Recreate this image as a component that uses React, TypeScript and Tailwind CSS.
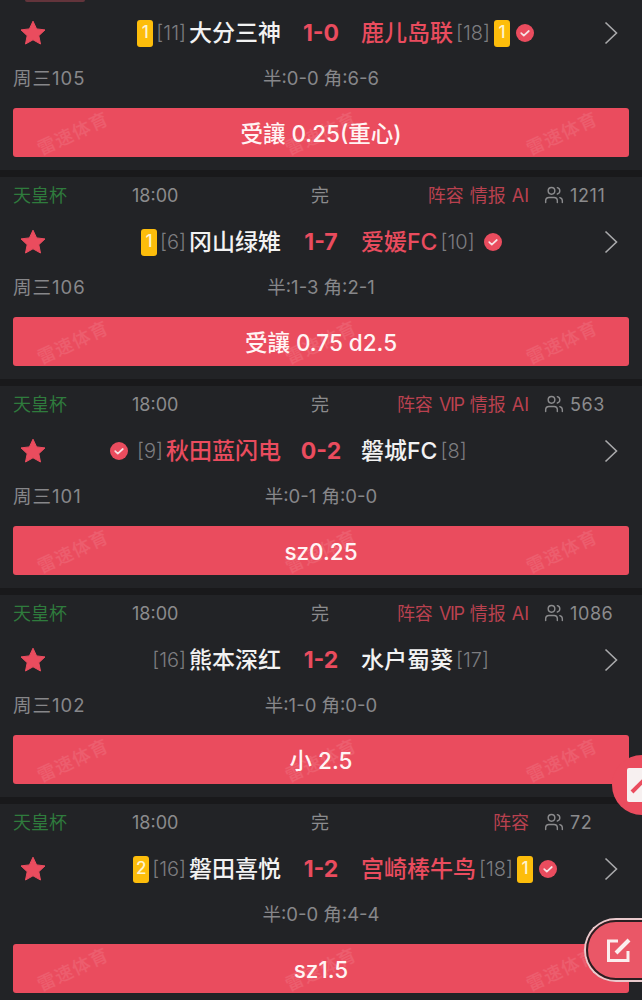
import { Users } from "lucide-react";

type Side = { name: string; rank?: string; badge?: string; won?: boolean; check?: boolean };

type Match = {
  links: string[];
  count: string;
  home: Side;
  away: Side;
  score: string;
  week?: string;
  half: string;
  tip: string;
};

const matches: Match[] = [
  {
    links: ["阵容", "情报", "AI"],
    count: "988",
    home: { name: "大分三神", rank: "[11]", badge: "1" },
    away: { name: "鹿儿岛联", rank: "[18]", badge: "1", won: true, check: true },
    score: "1-0",
    week: "周三105",
    half: "半:0-0 角:6-6",
    tip: "受讓 0.25(重心)",
  },
  {
    links: ["阵容", "情报", "AI"],
    count: "1211",
    home: { name: "冈山绿雉", rank: "[6]", badge: "1" },
    away: { name: "爱媛FC", rank: "[10]", won: true, check: true },
    score: "1-7",
    week: "周三106",
    half: "半:1-3 角:2-1",
    tip: "受讓 0.75 d2.5",
  },
  {
    links: ["阵容", "VIP", "情报", "AI"],
    count: "563",
    home: { name: "秋田蓝闪电", rank: "[9]", won: true, check: true },
    away: { name: "磐城FC", rank: "[8]" },
    score: "0-2",
    week: "周三101",
    half: "半:0-1 角:0-0",
    tip: "sz0.25",
  },
  {
    links: ["阵容", "VIP", "情报", "AI"],
    count: "1086",
    home: { name: "熊本深红", rank: "[16]" },
    away: { name: "水户蜀葵", rank: "[17]" },
    score: "1-2",
    week: "周三102",
    half: "半:1-0 角:0-0",
    tip: "小 2.5",
  },
  {
    links: ["阵容"],
    count: "72",
    home: { name: "磐田喜悦", rank: "[16]", badge: "2" },
    away: { name: "宫崎棒牛鸟", rank: "[18]", badge: "1", won: true, check: true },
    score: "1-2",
    half: "半:0-0 角:4-4",
    tip: "sz1.5",
  },
];

function Star() {
  return (
    <svg width="26" height="26" viewBox="0 0 26 26">
      <path
        d="M13 1.2l3.6 7.7 8.4 1-6.2 5.8 1.7 8.3-7.5-4.2-7.5 4.2 1.7-8.3L1 9.9l8.4-1z"
        fill="#ea4c5e"
        stroke="#ea4c5e"
        strokeLinejoin="round"
      />
    </svg>
  );
}

function Check() {
  return (
    <svg width="18" height="18" viewBox="0 0 18 18" className="shrink-0">
      <circle cx="9" cy="9" r="9" fill="#ea4c5e" />
      <path d="M5.2 9.2l2.6 2.4 5-4.6" fill="none" stroke="#f6e3e5" strokeWidth="1.7" strokeLinecap="round" strokeLinejoin="round" />
    </svg>
  );
}

function Chevron() {
  return (
    <svg width="14" height="24" viewBox="0 0 14 24">
      <path d="M1.5 1.5L12.5 12 1.5 22.5" fill="none" stroke="#a9a9ab" strokeWidth="1.6" />
    </svg>
  );
}

function Badge({ value }: { value: string }) {
  return (
    <span className="flex h-[27px] w-[16px] shrink-0 items-center justify-center rounded-[3px] bg-[#fdbd0b] text-[17px] font-medium text-[#fdf3d0]">
      {value}
    </span>
  );
}

function Mark({ className }: { className: string }) {
  return (
    <span className={`pointer-events-none absolute top-[12px] -rotate-[25deg] text-[18px] tracking-[1px] text-white/10 ${className}`}>
      雷速体育
    </span>
  );
}

function MatchCard({ match }: { match: Match }) {
  const { home, away } = match;
  return (
    <div className="bg-[#222326] px-[13px] pb-[13px]">
      <div className="flex h-[36px] items-center text-[18px] text-[#8b8b8d]">
        <span className="w-[119px] text-[#2f7b3d]">天皇杯</span>
        <span className="w-[178px]">18:00</span>
        <span className="w-[20px] text-center">完</span>
        <div className="ml-auto flex gap-[6px] text-[#b9414f]">
          {match.links.map((link) => (
            <span key={link} className={link === "VIP" ? "tracking-[-1.3px]" : ""}>
              {link}
            </span>
          ))}
        </div>
        <div className="flex w-[100px] items-center pl-[15px]">
          <Users size={20} strokeWidth={1.7} className="mr-[6px] shrink-0" />
          <span className="tracking-[0.6px]">{match.count}</span>
        </div>
      </div>

      <div className="relative flex h-[56px] items-center pt-[2px]">
        <div className="w-[40px] pl-[7px]">
          <Star />
        </div>
        <div className="flex w-[228px] items-center justify-end">
          {home.check && <Check />}
          {home.badge && <Badge value={home.badge} />}
          <span className={`${home.check ? "ml-[9px]" : "ml-[3px]"} text-[20px] font-light text-[#7d7d80]`}>{home.rank}</span>
          <span className={`ml-[3px] text-[23px] font-medium ${home.won ? "text-[#ea4c5e]" : "text-[#f2f2f2]"}`}>{home.name}</span>
        </div>
        <span className="w-[80px] text-center text-[23px] font-bold text-[#ea4c5e]">{match.score}</span>
        <div className="flex items-center">
          <span className={`text-[23px] font-medium ${away.won ? "text-[#ea4c5e]" : "text-[#f2f2f2]"}`}>{away.name}</span>
          <span className="ml-[3px] text-[20px] font-light text-[#7d7d80]">{away.rank}</span>
          {away.badge && <span className="ml-[4px]"><Badge value={away.badge} /></span>}
          {away.check && <span className={away.badge ? "ml-[6px]" : "ml-[9px]"}><Check /></span>}
        </div>
        <div className="ml-auto mr-[11px] flex">
          <Chevron />
        </div>
      </div>

      <div className="flex h-[36px] items-center pt-[2px] text-[18.5px] text-[#87878a]">
        <span className="w-[200px] tracking-[1px]">{match.week}</span>
        <span className="w-[216px] text-center">{match.half}</span>
      </div>

      <div className="relative mt-[12px] flex h-[49px] items-center justify-center overflow-hidden rounded-[3px] bg-[#ea4c5e] text-[22.5px] font-medium text-[#fff4f4]">
        <Mark className="left-[22px]" />
        <Mark className="left-[270px]" />
        <Mark className="left-[511px]" />
        <span className="relative pt-[2px]">{match.tip}</span>
      </div>
    </div>
  );
}

export default function App() {
  return (
    <div
      className="relative h-[1000px] w-[642px] overflow-hidden bg-[#19191b]"
      style={{ fontFamily: 'Inter, "Noto Sans CJK SC", sans-serif' }}
    >
      <div className="-mt-[32px] flex flex-col gap-[7px]">
        {matches.map((match) => (
          <MatchCard key={match.count} match={match} />
        ))}
      </div>

      <div className="absolute left-[25px] top-0 h-[2px] w-[60px] rounded-b-[2px] bg-[#63343b]" />

      <div className="absolute left-[612px] top-[755px] flex h-[60px] w-[60px] items-center rounded-full bg-[#ea4c5e] pl-[15px]">
        <div className="flex h-[34px] w-[34px] items-center justify-center rounded-[2px] bg-[#f7f0f0]">
          <svg width="22" height="22" viewBox="0 0 22 22" className="-ml-[8px]">
            <path d="M3 18L15 6" fill="none" stroke="#ea4c5e" strokeWidth="4" />
          </svg>
        </div>
      </div>

      <div className="absolute left-[584px] top-[918px] flex h-[64px] w-[80px] items-center rounded-l-[32px] border-2 border-r-0 border-[#e9c9cc] bg-[#ea5767] pl-[20px] outline-2 -outline-offset-4 outline-[#2b1f22]">
        <svg width="26" height="26" viewBox="0 0 26 26">
          <path d="M12 4H2.5v19.5H22V14" fill="none" stroke="#fbeeee" strokeWidth="3" />
          <path d="M10 16L23 3" fill="none" stroke="#fbeeee" strokeWidth="4" />
        </svg>
      </div>
    </div>
  );
}
